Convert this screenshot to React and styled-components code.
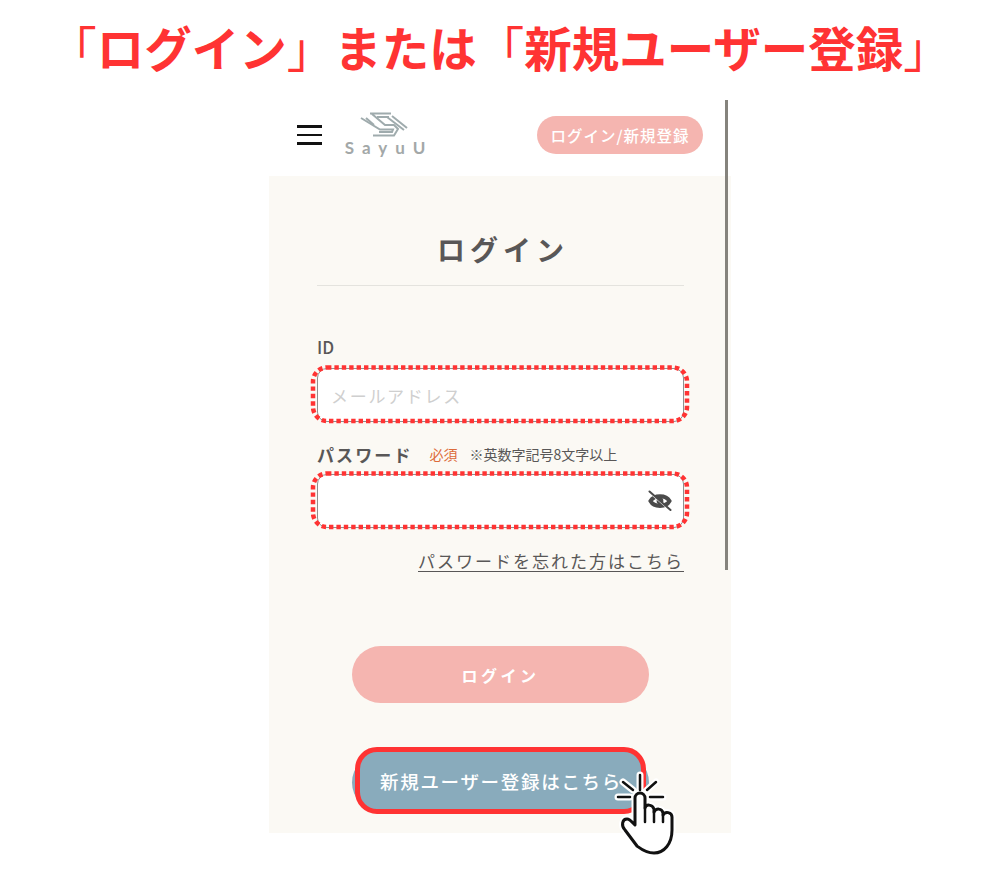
import styled, { createGlobalStyle } from "styled-components"

const jp = `"Noto Sans CJK JP", "Noto Sans", sans-serif`

const handBody =
  "M25 55 V28 a5 5 0 0 1 10 0 V38 C36 34 42 34 44 39 V42 C46 38 52 38 53 43 V45 C55 41 62 42 62 47 V60 C62 74 54 83 44 83 C36 83 31 79 27 76 L15 60 C11 56 12 49 17 49 C20 49 23 53 25 55 Z"
const handRays = "M30 5 V20 M13 12 L23 20 M46 12 L37 20 M8 27 H20 M40 27 H53"

const GlobalStyle = createGlobalStyle`
  body {
    margin: 0;
    background: #fff;
    font-family: ${jp};
    color: #595757;
  }
`

const DottedFrame = () => (
  <Dots>
    <rect x="2" y="2.5" width="374" height="53.5" rx="14" />
  </Dots>
)

const Logo = () => (
  <LogoMark viewBox="0 0 48 25">
    <path d="M10 1.5 H31 M12 2 L25 13 H34 L38 17 L34 23.5 H13" />
    <path d="M17 5 L29 5 M19 20 H32 L33 17.5 H20 L1 6" />
    <path d="M6 6 L14 13 M27 5 L44 18 M32 4 L47 16" />
  </LogoMark>
)

const Eye = () => (
  <EyeIcon viewBox="0 0 24 20">
    <path className="outline" d="M2.5 10 C6 3.5 18 3.5 21.5 10 C18 16.5 6 16.5 2.5 10 Z" />
    <circle cx="12" cy="10" r="3.4" />
    <path className="gap" d="M3 3 L21 18.5" />
    <path className="slash" d="M1.5 0.5 L22.5 19" />
  </EyeIcon>
)

const Hand = () => (
  <HandIcon viewBox="0 0 70 90">
    <path className="halo" d={handRays} />
    <path className="halo" d={handBody} />
    <path className="rays" d={handRays} />
    <path className="body" d={handBody} />
    <path className="rays" d="M35 38 V52 M44 42 V52 M53 45 V52" />
  </HandIcon>
)

const App = () => {
  return (
    <Page>
      <GlobalStyle />
      <Title>
        <Bracket>「</Bracket>ログイン<Bracket>」</Bracket>または<Bracket>「</Bracket>新規ユーザー登録<Bracket>」</Bracket>
      </Title>
      <Phone>
        <Scrollbar />
        <Header>
          <Burger>
            <span />
            <span />
            <span />
          </Burger>
          <Brand>
            <Logo />
            <BrandName>SayuU</BrandName>
          </Brand>
          <LoginPill>ログイン/新規登録</LoginPill>
        </Header>
        <Main>
          <Heading>ログイン</Heading>
          <Label>ID</Label>
          <Field>
            <Placeholder>メールアドレス</Placeholder>
            <DottedFrame />
          </Field>
          <LabelRow>
            <StrongLabel>パスワード</StrongLabel>
            <Required>必須</Required>
            <Hint>※英数字記号8文字以上</Hint>
          </LabelRow>
          <Field>
            <Eye />
            <DottedFrame />
          </Field>
          <Forgot>パスワードを忘れた方はこちら</Forgot>
          <SubmitButton>ログイン</SubmitButton>
          <RegisterButton>
            <RegisterHighlight />
            <RegisterText>新規ユーザー登録はこちら</RegisterText>
            <Hand />
          </RegisterButton>
        </Main>
      </Phone>
    </Page>
  )
}

const Page = styled.div`
  min-height: 870px;
`

const Title = styled.h1`
  margin: 0;
  height: 100px;
  box-sizing: border-box;
  padding-top: 14px;
  text-align: center;
  white-space: nowrap;
  font-size: 47.5px;
  line-height: 66px;
  font-weight: 700;
  color: #ff3333;
`

const Bracket = styled.span`
  font-weight: 400;
`

const Phone = styled.div`
  position: relative;
  width: 462px;
  margin: 0 auto;
`

const Scrollbar = styled.div`
  position: absolute;
  top: 0;
  left: 456px;
  width: 3px;
  height: 470px;
  background: #85837d;
`

const Header = styled.header`
  height: 76px;
  box-sizing: border-box;
  display: flex;
  align-items: center;
  padding: 0 28px 7px;
  background: #fff;
`

const Burger = styled.div`
  width: 25px;
  display: flex;
  flex-direction: column;
  gap: 6px;
  margin-top: 1px;

  span {
    height: 2.5px;
    background: #111;
  }
`

const Brand = styled.div`
  width: 80px;
  margin-left: 23px;
  display: flex;
  flex-direction: column;
  align-items: center;
  margin-top: 1px;
`

const LogoMark = styled.svg`
  width: 48px;
  height: 25px;
  margin-left: -2px;
  fill: none;
  stroke: #9fabad;
  stroke-width: 2;
`

const BrandName = styled.div`
  font-family: "Lato", sans-serif;
  font-size: 17px;
  font-weight: 700;
  line-height: 22px;
  letter-spacing: 8px;
  margin-right: -8px;
  color: #a3a8a8;
`

const LoginPill = styled.div`
  margin-left: auto;
  width: 166px;
  height: 38px;
  margin-top: 1px;
  border-radius: 19px;
  background: #f5b5b0;
  color: #fff;
  display: flex;
  align-items: center;
  justify-content: center;
  font-size: 15.5px;
  font-weight: 500;
  letter-spacing: 1px;
`

const Main = styled.main`
  height: 657px;
  box-sizing: border-box;
  padding: 50px 47px 0 48px;
  background: #fbf9f4;
`

const Heading = styled.h2`
  margin: 0;
  height: 59px;
  border-bottom: 1px solid #e4e3de;
  text-align: center;
  font-size: 28px;
  line-height: 46px;
  font-weight: 700;
  letter-spacing: 5px;
  padding-left: 5px;
`

const Label = styled.div`
  margin-top: 50px;
  height: 32px;
  font-size: 17px;
  line-height: 22px;
  font-weight: 500;
`

const Field = styled.div`
  position: relative;
  height: 54px;
  box-sizing: border-box;
  display: flex;
  align-items: center;
  padding: 0 13px;
  background: #fff;
  border: 1px solid #8f8f8f;
  border-radius: 10px;
`

const Dots = styled.svg`
  position: absolute;
  top: -4px;
  left: -7px;
  width: 378px;
  height: 58px;
  overflow: visible;

  rect {
    fill: none;
    stroke: #ff3333;
    stroke-width: 4.5;
    stroke-dasharray: 4.4 3;
  }
`

const Placeholder = styled.span`
  font-size: 17px;
  letter-spacing: 1.7px;
  color: #cfcfcf;
`

const LabelRow = styled.div`
  display: flex;
  align-items: center;
  height: 52px;
  padding-top: 12px;
  box-sizing: border-box;
`

const StrongLabel = styled.span`
  font-size: 17px;
  font-weight: 700;
  letter-spacing: 2.1px;
  margin-right: 17px;
`

const Required = styled.span`
  font-size: 14px;
  color: #dd6b3a;
  margin-right: 12px;
`

const Hint = styled.span`
  font-size: 14px;
`

const EyeIcon = styled.svg`
  margin-left: auto;
  margin-right: -2px;
  width: 24px;
  height: 20px;
  overflow: visible;
  fill: #4b4b4b;

  path {
    fill: none;
    stroke-linecap: round;
  }
  .outline {
    stroke: #4b4b4b;
    stroke-width: 4;
  }
  .gap {
    stroke: #fff;
    stroke-width: 1.4;
  }
  .slash {
    stroke: #4b4b4b;
    stroke-width: 2;
  }
`

const Forgot = styled.a`
  display: block;
  margin-top: 19px;
  text-align: right;
  font-size: 17px;
  line-height: 28px;
  letter-spacing: 2px;
  text-decoration: underline;
  text-underline-offset: 3px;
`

const SubmitButton = styled.div`
  width: 297px;
  height: 57px;
  margin: 71px auto 0;
  border-radius: 29px;
  background: #f5b5b0;
  color: #fff;
  display: flex;
  align-items: center;
  justify-content: center;
  font-size: 16px;
  font-weight: 700;
  letter-spacing: 3.5px;
`

const RegisterButton = styled.div`
  position: relative;
  width: 297px;
  height: 57px;
  margin: 51px auto 0;
  border-radius: 29px;
  background: #89abbc;
  display: flex;
  align-items: center;
  justify-content: center;
`

const RegisterHighlight = styled.div`
  position: absolute;
  top: -7px;
  left: 3px;
  width: 291px;
  height: 67px;
  box-sizing: border-box;
  background: #89abbc;
  border: 5px solid #ff3333;
  border-radius: 22px;
`

const RegisterText = styled.span`
  position: relative;
  color: #fff;
  font-size: 18.5px;
  font-weight: 500;
  letter-spacing: 1.7px;
  margin-left: 1px;
  margin-top: -4px;
`

const HandIcon = styled.svg`
  position: absolute;
  top: 16px;
  left: 258px;
  width: 70px;
  height: 90px;
  overflow: visible;

  path {
    fill: none;
    stroke-linecap: round;
    stroke-linejoin: round;
  }
  path.halo {
    stroke: #fff;
    stroke-width: 7;
  }
  path.rays {
    stroke: #111;
    stroke-width: 2.5;
  }
  path.body {
    fill: #fff;
    stroke: #111;
    stroke-width: 3;
  }
`

export default App
